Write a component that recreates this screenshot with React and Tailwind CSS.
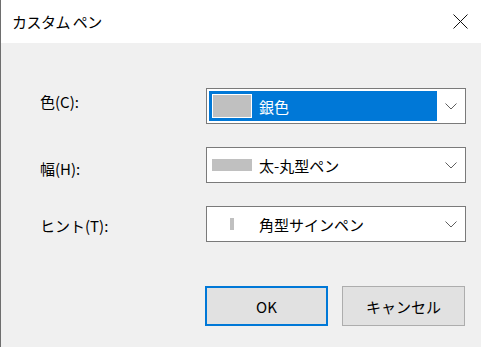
import React from "react";

const font = { fontFamily: '"Noto Sans CJK JP", "Noto Sans", sans-serif' };

const Chevron = () => (
    <svg width="12" height="7" viewBox="0 0 12 7" className="shrink-0">
        <polyline points="0.5,0.5 6,6 11.5,0.5" fill="none" stroke="#5f5f5f" strokeWidth="1" />
    </svg>
);

const Combo = ({ children, selected }) => (
    <div className="w-[260px] h-[36px] border border-[#7a7a7a] bg-white flex items-center p-[2px] pr-[8px]">
        <div
            className={`h-full w-[228px] flex items-center ${
                selected ? "bg-[#0078d7] text-white" : "text-black"
            }`}
        >
            {children}
        </div>
        <div className="flex-1 flex justify-end">
            <Chevron />
        </div>
    </div>
);

export default function App() {
    return (
        <div
            className="w-[481px] h-[347px] flex flex-col border-l border-[#6e6e6e] text-[15px] leading-none"
            style={font}
        >
            {/* title bar */}
            <div className="h-[43px] bg-white flex items-center justify-between pl-[11px] pr-[13px]">
                <span className="text-[15px] text-black tracking-[-0.5px]">カスタム ペン</span>
                <svg width="15" height="15" viewBox="0 0 15 15">
                    <path d="M0.5 0.5 L14.5 14.5 M14.5 0.5 L0.5 14.5" stroke="#111" strokeWidth="1" />
                </svg>
            </div>

            {/* body */}
            <div className="flex-1 bg-[#f0f0f0] flex flex-col pt-[45px] pl-[39px]">
                <div className="flex flex-col gap-[23px]">
                    <div className="flex items-center">
                        <span className="w-[166px] mb-[10px] text-black">色(C):</span>
                        <Combo selected>
                            <div className="ml-[3px] w-[40px] h-[24px] border border-white bg-[#c0c0c0]" />
                            <span className="ml-[7px]">銀色</span>
                        </Combo>
                    </div>
                    <div className="flex items-center">
                        <span className="w-[166px] mt-[6px] text-black">幅(H):</span>
                        <Combo>
                            <div className="ml-[3px] w-[40px] h-[12px] bg-[#c0c0c0]" />
                            <span className="ml-[7px]">太-丸型ペン</span>
                        </Combo>
                    </div>
                    <div className="flex items-center">
                        <span className="w-[166px] mt-[2px] text-black">ヒント(T):</span>
                        <Combo>
                            <div className="ml-[21px] w-[4px] h-[12px] bg-[#c0c0c0]" />
                            <span className="ml-[25px]">角型サインペン</span>
                        </Combo>
                    </div>
                </div>

                {/* buttons */}
                <div className="flex justify-end gap-[14px] mt-[44px] pr-[16px]">
                    <button className="w-[123px] h-[40px] border-2 border-[#0078d7] bg-[#e1e1e1] text-black text-[15px]">
                        OK
                    </button>
                    <button className="w-[123px] h-[40px] border border-[#adadad] bg-[#e1e1e1] text-black text-[15px]">
                        キャンセル
                    </button>
                </div>
            </div>
        </div>
    );
}
